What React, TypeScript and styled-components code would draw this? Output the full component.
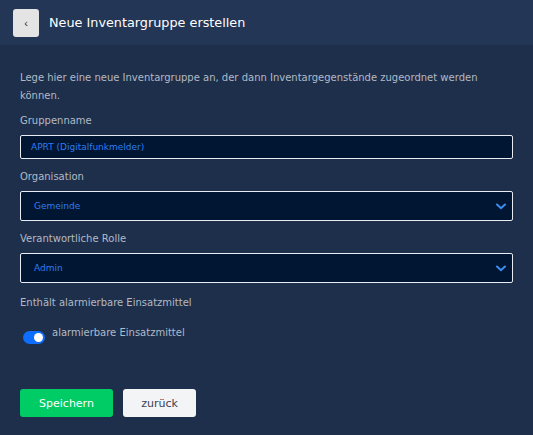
import { createGlobalStyle } from 'styled-components'
import styled from 'styled-components'

const GlobalStyle = createGlobalStyle`
  html, body {
    margin: 0;
    padding: 0;
    background: #1d2f4b;
  }
  body {
    font-family: 'DejaVu Sans', 'Open Sans', sans-serif;
  }
  * {
    box-sizing: border-box;
  }
`

const Page = styled.div`
  width: 533px;
  height: 435px;
  background: #1d2f4b;
  overflow: hidden;
`

const Header = styled.div`
  height: 45px;
  background: #243656;
  display: flex;
  align-items: center;
  padding: 0 13px;
  gap: 10px;
`

const BackButton = styled.button`
  width: 26px;
  height: 28px;
  border: none;
  border-radius: 3px;
  background: #e4e4e4;
  color: #333;
  font-size: 11px;
  display: flex;
  align-items: center;
  justify-content: center;
  padding: 0;
`

const Title = styled.h1`
  margin: 0;
  font-size: 12.8px;
  font-weight: 400;
  color: #fff;
`

const Body = styled.div`
  padding: 24px 20px 0;
  display: flex;
  flex-direction: column;
`

const Intro = styled.p`
  margin: 0 0 8px;
  font-size: 10px;
  line-height: 18px;
  color: #b3bac6;
`

const Label = styled.label<{ spaced?: boolean }>`
  display: block;
  font-size: 10px;
  line-height: 16px;
  color: #b3bac6;
  margin-top: ${(p) => (p.spaced ? '2px' : '0')};
  margin-bottom: 6px;
`

const Field = styled.div`
  margin-bottom: 10px;
`

const TextInput = styled.div`
  height: 24px;
  border: 1px solid #e8ecf2;
  border-radius: 2px;
  background: #001633;
  color: #2f7cf0;
  font-size: 9px;
  display: flex;
  align-items: center;
  padding: 0 10px;
`

const Select = styled.div`
  height: 30px;
  border: 1px solid #e8ecf2;
  border-radius: 2px;
  background: #001633;
  color: #2f7cf0;
  font-size: 9px;
  display: flex;
  align-items: center;
  justify-content: space-between;
  padding: 0 6px 0 13px;
`

const ToggleRow = styled.div`
  display: flex;
  align-items: flex-start;
  gap: 7px;
  margin: 8px 0 0 3px;
`

const Track = styled.div<{ on: boolean }>`
  width: 22px;
  height: 13px;
  border-radius: 7px;
  background: ${(p) => (p.on ? '#0d6efd' : '#6c757d')};
  margin-top: 6px;
  display: flex;
  align-items: center;
  justify-content: ${(p) => (p.on ? 'flex-end' : 'flex-start')};
  padding: 0 2px;
`

const Knob = styled.div`
  width: 9px;
  height: 9px;
  border-radius: 50%;
  background: #fff;
`

const ToggleText = styled.span`
  font-size: 10px;
  line-height: 16px;
  color: #b3bac6;
`

const Actions = styled.div`
  display: flex;
  gap: 10px;
  margin-top: 45px;
`

const Button = styled.button<{ primary?: boolean }>`
  height: 28px;
  border: none;
  border-radius: 3px;
  font-family: inherit;
  font-size: 11px;
  padding: 0;
  width: ${(p) => (p.primary ? '93px' : '73px')};
  background: ${(p) => (p.primary ? '#00cc66' : '#f3f4f6')};
  color: ${(p) => (p.primary ? '#fff' : '#3a4150')};
`

const Chevron = () => (
  <svg width="10" height="7" viewBox="0 0 10 7">
    <path d="M1 1.5 L5 5.2 L9 1.5" fill="none" stroke="#3b8ff0" strokeWidth="2" strokeLinecap="round" />
  </svg>
)

export default function App() {
  return (
    <Page>
      <GlobalStyle />
      <Header>
        <BackButton>‹</BackButton>
        <Title>Neue Inventargruppe erstellen</Title>
      </Header>
      <Body>
        <Intro>
          Lege hier eine neue Inventargruppe an, der dann Inventargegenstände zugeordnet werden können.
        </Intro>
        <Field>
          <Label>Gruppenname</Label>
          <TextInput>APRT (Digitalfunkmelder)</TextInput>
        </Field>
        <Field>
          <Label>Organisation</Label>
          <Select>
            Gemeinde
            <Chevron />
          </Select>
        </Field>
        <Field>
          <Label>Verantwortliche Rolle</Label>
          <Select>
            Admin
            <Chevron />
          </Select>
        </Field>
        <Label spaced>Enthält alarmierbare Einsatzmittel</Label>
        <ToggleRow>
          <Track on>
            <Knob />
          </Track>
          <ToggleText>alarmierbare Einsatzmittel</ToggleText>
        </ToggleRow>
        <Actions>
          <Button primary>Speichern</Button>
          <Button>zurück</Button>
        </Actions>
      </Body>
    </Page>
  )
}
